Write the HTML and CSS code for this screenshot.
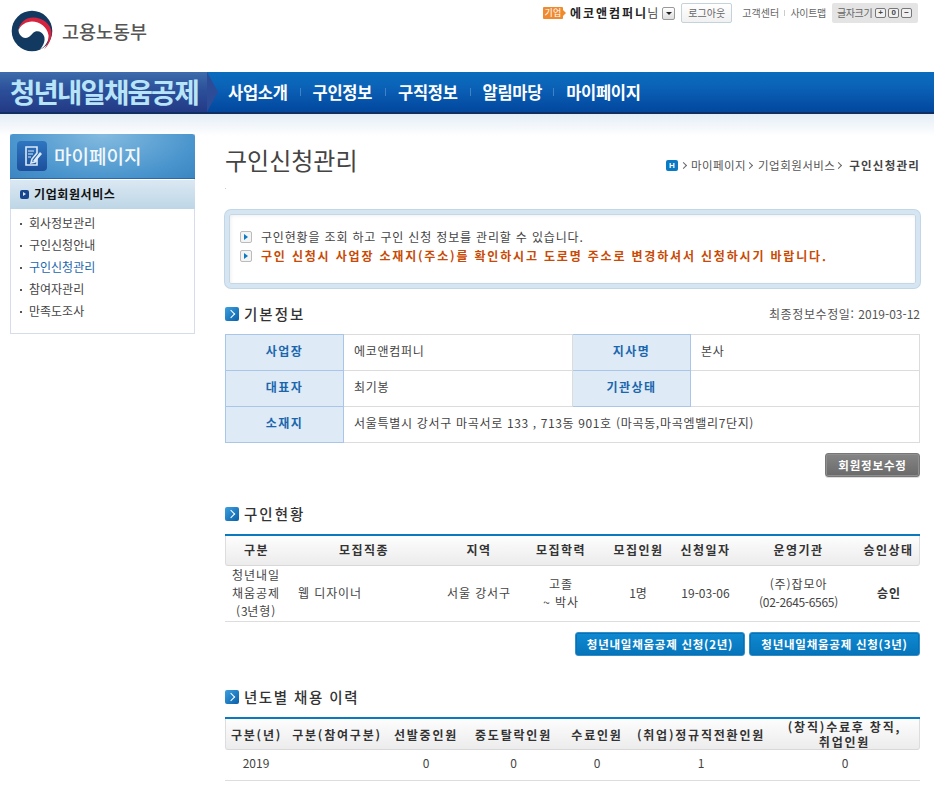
FILE: index.html
```html
<!DOCTYPE html>
<html lang="ko">
<head>
<meta charset="utf-8">
<title>구인신청관리</title>
<link rel="stylesheet" href="styles.css">
</head>
<body>
<header class="top">
  <a class="logo">
    <svg class="logo-mark" viewBox="0 0 42 42" width="42" height="42">
      <circle cx="21" cy="21" r="20.3" fill="#12395f"/>
      <path d="M7.5 20C9 13 15 10 21 10C30 10 38 16 38 25C38 31 34 37 29 39.5C33 35 34.5 30 33 26C31 21 25 20 22 23C19 27 15 29 12 27.5C9 26 7.5 23 7.5 20Z" fill="#fff"/>
      <path d="M7.5 20C9 12 15 7.5 22 7.5C32 7.5 39.5 14 40.5 22C41 29 37 36 33 39.5C37 34 38 29 37.5 25C36 17 29 11.5 21 11.5C15 11.5 10 15 7.5 20Z" fill="#d6233f"/>
    </svg>
    <span class="logo-text">고용노동부</span>
  </a>
  <div class="util">
    <span class="badge">기업</span>
    <strong class="company">에코앤컴퍼니</strong><span class="nim">님</span>
    <span class="drop"></span>
    <span class="logout">로그아웃</span>
    <span class="util-link first">고객센터</span>
    <i class="util-sep"></i>
    <span class="util-link">사이트맵</span>
    <span class="fontsize">글자크기<b>+</b><b>0</b><b>−</b></span>
  </div>
</header>

<nav class="gnb">
  <div class="brand">청년내일채움공제</div>
  <ul class="gnb-list">
    <li class="m1">사업소개</li>
    <li class="m2">구인정보</li>
    <li class="m3">구직정보</li>
    <li class="m4">알림마당</li>
    <li class="m5">마이페이지</li>
  </ul>
</nav>

<div class="wrap">
  <aside class="side">
    <div class="side-title">
      <span class="side-icon">
        <svg viewBox="0 0 30 30" width="30" height="30"><path d="M9 6H20V12L15 18L14 22L18 21L20 18V24H9Z" fill="none" stroke="#dbe9f7" stroke-width="1.6"/><path d="M11 10H17M11 13H16M11 16H14" stroke="#dbe9f7" stroke-width="1.2"/><path d="M16 20L23 11L25 13L18 21Z" fill="#dbe9f7"/></svg>
      </span>
      <span class="side-name">마이페이지</span>
    </div>
    <div class="side-sub"><i class="sub-bullet"></i>기업회원서비스</div>
    <ul class="side-list">
      <li>회사정보관리</li>
      <li>구인신청안내</li>
      <li class="on">구인신청관리</li>
      <li>참여자관리</li>
      <li>만족도조사</li>
    </ul>
  </aside>

  <main class="main">
    <div class="page-head">
      <h1>구인신청관리</h1>
      <div class="crumb"><span class="home">H</span><span class="gt g1"></span><span class="crumb-item">마이페이지</span><span class="gt"></span><span class="crumb-item">기업회원서비스</span><span class="gt g3"></span><strong>구인신청관리</strong></div>
    </div>

    <div class="notice">
      <p><i class="nb"></i>구인현황을 조회 하고 구인 신청 정보를 관리할 수 있습니다.</p>
      <p class="warn"><i class="nb"></i>구인 신청시 사업장 소재지(주소)를 확인하시고 도로명 주소로 변경하셔서 신청하시기 바랍니다.</p>
    </div>

    <div class="sec-head first-sec">
      <h2><i class="sec-icon"></i>기본정보</h2>
      <span class="updated">최종정보수정일: <span class="num">2019-03-12</span></span>
    </div>
    <table class="info">
      <colgroup><col class="c1"><col class="c2"><col class="c3"><col></colgroup>
      <tr><th>사업장</th><td>에코앤컴퍼니</td><th>지사명</th><td>본사</td></tr>
      <tr><th>대표자</th><td>최기봉</td><th>기관상태</th><td></td></tr>
      <tr><th>소재지</th><td colspan="3">서울특별시 강서구 마곡서로 <span class="addr-num">133 , 713</span>동 <span class="addr-num">901</span>호 (마곡동,마곡엠밸리<span class="addr-num">7</span>단지)</td></tr>
    </table>
    <div class="btn-row edit-row"><span class="btn gray">회원정보수정</span></div>

    <div class="sec-head s2"><h2><i class="sec-icon"></i>구인현황</h2></div>
    <table class="list t2">
      <colgroup><col class="a1"><col class="a2"><col class="a3"><col class="a4"><col class="a5"><col class="a6"><col class="a7"><col class="a8"></colgroup>
      <thead><tr><th>구분</th><th>모집직종</th><th>지역</th><th>모집학력</th><th>모집인원</th><th>신청일자</th><th>운영기관</th><th>승인상태</th></tr></thead>
      <tbody><tr>
        <td>청년내일<br>채움공제<br>(<span class="num">3</span>년형)</td>
        <td class="left">웹 디자이너</td>
        <td>서울 강서구</td>
        <td>고졸<br>~ 박사</td>
        <td><span class="num">1</span>명</td>
        <td class="num">19-03-06</td>
        <td>(주)잡모아<br><span class="num">(02-2645-6565)</span></td>
        <td><strong>승인</strong></td>
      </tr></tbody>
    </table>
    <div class="btn-row apply-row"><span class="btn blue">청년내일채움공제 신청(2년)</span><span class="btn blue">청년내일채움공제 신청(3년)</span></div>

    <div class="sec-head s3"><h2><i class="sec-icon"></i>년도별 채용 이력</h2></div>
    <table class="list t3">
      <colgroup><col class="b1"><col class="b2"><col class="b3"><col class="b4"><col class="b5"><col class="b6"><col></colgroup>
      <thead><tr><th>구분(년)</th><th>구분(참여구분)</th><th>선발중인원</th><th>중도탈락인원</th><th>수료인원</th><th>(취업)정규직전환인원</th><th>(창직)수료후 창직,<br>취업인원</th></tr></thead>
      <tbody><tr><td class="num">2019</td><td></td><td class="num">0</td><td class="num">0</td><td class="num">0</td><td class="num">1</td><td class="num">0</td></tr></tbody>
    </table>
  </main>
</div>
</body>
</html>
```

FILE: styles.css
```css
* { box-sizing: border-box; }
html, body { margin: 0; padding: 0; }
body {
  width: 934px;
  height: 800px;
  overflow: hidden;
  background: #fff;
  color: #444;
  font: 12px/1.4 "Noto Sans CJK KR", "Noto Sans", sans-serif;
  letter-spacing: 1px;
}
ul { margin: 0; padding: 0; list-style: none; }
h1, h2, p { margin: 0; font-weight: normal; }
i { display: inline-block; }
.num { letter-spacing: -0.3px; }

/* top */
.top { height: 72px; display: flex; justify-content: space-between; align-items: flex-start; }
.logo { display: flex; align-items: center; padding: 10px 0 0 11px; }
.logo-mark { display: block; }
.logo-text { margin: 0 0 0 9px; font-size: 18.5px; line-height: 24px; color: #555; letter-spacing: 0; font-weight: 500; }
.util { display: flex; align-items: center; height: 20px; margin: 3px 16px 0 0; color: #555; font-size: 11px; letter-spacing: 0; }
.badge { width: 20px; height: 12px; background: #f08a30; color: #fff; font-size: 9px; line-height: 12px; text-align: center; border-radius: 1px; margin-right: 7px; position: relative; }
.badge::after { content: ""; position: absolute; left: 20px; top: 3px; border-left: 3px solid #f08a30; border-top: 3px solid transparent; border-bottom: 3px solid transparent; }
.company { font-size: 12px; color: #222; letter-spacing: 2px; margin-right: -1px; }
.nim { font-size: 12px; color: #444; }
.drop { width: 13px; height: 13px; margin: 0 6px 0 4px; border: 1px solid #999; border-radius: 2px; background: linear-gradient(#fff, #ddd); position: relative; }
.drop::after { content: ""; position: absolute; left: 3px; top: 4px; border: 3px solid transparent; border-top: 3px solid #222; border-bottom: 0; }
.logout { width: 51px; height: 20px; border: 1px solid #c4d2dc; border-radius: 2px; background: linear-gradient(#fff, #f1f1f1); text-align: center; line-height: 17px; font-size: 10px; color: #666; }
.util-link { font-size: 10px; color: #666; letter-spacing: -.3px; }
.util-link.first { margin-left: 10px; letter-spacing: .1px; }
.util-sep { width: 1px; height: 6px; background: #ccc; margin: 0 5px; }
.fontsize { display: flex; align-items: center; gap: 2px; height: 20px; width: 86px; margin-left: 6px; padding: 0 0 0 5px; background: #e4e4e4; border-radius: 2px; font-size: 10px; color: #666; letter-spacing: -.4px; }
.fontsize b { width: 11px; height: 10px; border: 1px solid #777; border-radius: 2px; font: 700 8px/8px "Liberation Sans", sans-serif; color: #444; text-align: center; background: #f0f0f0; letter-spacing: 0; }
.fontsize b:first-of-type { margin-left: 1px; }

/* gnb */
.gnb { height: 42px; display: flex; background: linear-gradient(#0a6cbd, #0b63b8 35%, #02479e); border-bottom: 2px solid #0f2f63; position: relative; }
.brand {
  width: 207px; height: 40px; padding-left: 10px;
  background: linear-gradient(#3d6cab, #2c4f9a 45%, #233a86);
  color: #b8e4f8; font-size: 27.5px; font-weight: 700; line-height: 38px; letter-spacing: -1.8px;
  position: relative; white-space: nowrap;
}
.brand::after { content: ""; position: absolute; left: 207px; top: 0; border-left: 11px solid #2c4c97; border-top: 20px solid transparent; border-bottom: 20px solid transparent; }
.gnb-list { display: flex; color: #fff; font-size: 16.5px; font-weight: 700; line-height: 40px; letter-spacing: -.3px; }
.gnb-list li { position: relative; white-space: nowrap; }
.gnb-list li + li::before { content: ""; position: absolute; left: -13px; top: 16px; width: 1px; height: 8px; background: #3f82c6; }
.m1 { margin-left: 21px; }
.m2 { margin-left: 25px; }
.m3 { margin-left: 26px; }
.m4 { margin-left: 25px; }
.m5 { margin-left: 24px; }

/* wrap */
.wrap { display: flex; align-items: flex-start; background: linear-gradient(#e3edf6, #fff 22px) no-repeat; background-size: 100% 24px; }
.side { width: 185px; margin: 20px 0 0 10px; border: 1px solid #d5dde9; border-top: 0; }
.side-title { height: 45px; margin: 0 -1px; display: flex; align-items: center; padding-left: 7px; border-radius: 3px 3px 0 0; background: radial-gradient(ellipse at 50% 0, #84bbe0, #4a95cd 70%, #3b85c2); border-bottom: 1px solid #2a6aa8; }
.side-icon { width: 30px; height: 30px; border-radius: 4px; background: linear-gradient(#2f76c0, #1d4f9c); display: block; }
.side-name { margin-left: 7px; color: #f2f7fc; font-size: 19px; font-weight: 500; line-height: 26px; letter-spacing: 0; }
.side-sub { height: 29px; margin-top: 1px; margin-left: -1px; margin-right: -1px; padding-left: 10px; display: flex; align-items: center; background: linear-gradient(#dbe8f2, #bdd6e6); color: #111; font-weight: 700; letter-spacing: .6px; }
.sub-bullet { width: 9px; height: 9px; margin-right: 5px; border-radius: 2px; background: #17488f; position: relative; }
.sub-bullet::after { content: ""; position: absolute; left: 3px; top: 2px; border-left: 3px solid #dce9f3; border-top: 2.5px solid transparent; border-bottom: 2.5px solid transparent; }
.side-list { padding: 3px 0 11px; }
.side-list li { height: 22px; line-height: 22px; padding-left: 18px; position: relative; color: #444; letter-spacing: 0; }
.side-list li::before { content: ""; position: absolute; left: 9px; top: 11px; width: 2px; height: 2px; background: #555; }
.side-list li.on { color: #1a66ad; }

/* main */
.main { width: 695px; margin-left: 30px; }
.page-head { height: 96px; position: relative; }
.page-head::after { content: ""; position: absolute; left: 0; top: 74px; width: 1px; height: 1px; background: #ccc; }
.page-head h1 { padding-top: 29px; font-size: 24px; line-height: 34px; color: #444; letter-spacing: 0; }
.crumb { position: absolute; right: 0; top: 43px; display: flex; align-items: center; font-size: 11.5px; line-height: 16px; color: #555; letter-spacing: 0; white-space: nowrap; }
.crumb-item { letter-spacing: .45px; }
.crumb strong { color: #444; letter-spacing: 1.2px; }
.home { width: 12px; height: 11px; border-radius: 2px; background: #0b79c3; color: #fff; font: 700 8px/11px "Liberation Sans", sans-serif; text-align: center; margin-right: 2px; }
.gt { width: 5px; height: 5px; margin: 0 6px 0 1px; border-top: 1px solid #666; border-right: 1px solid #666; transform: rotate(45deg); }
.gt.g1 { margin-right: 5px; }
.gt.g3 { margin-right: 8px; }

.notice { height: 78px; padding: 13px 0 0 11px; border: 4px solid #d6e5f2; border-radius: 6px; box-shadow: inset 0 0 0 1px #c6d6e4, inset 1px 1px 4px #e8e8e8, 0 0 0 1px #c2d6e8; background: #fff; margin: 0; }
.notice p { height: 19px; line-height: 19px; white-space: nowrap; color: #444; letter-spacing: .83px; display: flex; align-items: center; }
.notice .warn { color: #c84a05; font-weight: 700; letter-spacing: 1.82px; }
.nb { width: 12px; height: 12px; margin-right: 9px; border: 1px solid #bbb; border-radius: 2px; background: #f4f4f4; position: relative; flex: none; }
.nb::after { content: ""; position: absolute; left: 3px; top: 2px; border-left: 4px solid #0b79c3; border-top: 3px solid transparent; border-bottom: 3px solid transparent; }

.sec-head { display: flex; justify-content: space-between; align-items: center; height: 22px; }
.first-sec { margin-top: 15px; }
.sec-head h2 { display: flex; align-items: center; font-size: 14.5px; font-weight: 500; line-height: 22px; color: #333; letter-spacing: 2px; }
.sec-icon { width: 14px; height: 14px; margin-right: 5px; border-radius: 2px; background: linear-gradient(135deg, #3ba0e0, #0b5fa8); position: relative; flex: none; }
.sec-icon::after { content: ""; position: absolute; left: 3px; top: 4px; width: 5px; height: 5px; border-top: 1.5px solid #fff; border-right: 1.5px solid #fff; transform: rotate(45deg); }
.updated { color: #555; letter-spacing: .6px; }
.updated .num { letter-spacing: 0; }

table { width: 695px; border-collapse: collapse; table-layout: fixed; }
.info { margin-top: 9px; }
.c1 { width: 118px; }
.c2 { width: 229px; }
.c3 { width: 118px; }
.info th, .info td { height: 36px; padding: 0 0 3px; }
.info th { background: #deeaf5; color: #1a66ad; font-weight: 700; border: 1px solid #a9c6e8; text-align: center; letter-spacing: 1.4px; }
.info td { padding-left: 10px; color: #444; letter-spacing: .7px; border: 1px solid #dcdcdc; }
.addr-num { letter-spacing: .6px; }

.btn-row { display: flex; justify-content: flex-end; }
.edit-row { margin-top: 10px; }
.btn { display: block; height: 24px; text-align: center; line-height: 22px; border-radius: 3px; color: #fff; font-weight: 700; white-space: nowrap; font-size: 11.5px; }
.gray { width: 95px; letter-spacing: .8px; background: linear-gradient(#858585, #6a6a6a); border: 1px solid #777; box-shadow: inset 0 0 0 1px #8f8f8f, 0 1px 0 #ddd; }
.blue { width: 171px; letter-spacing: .75px; background: linear-gradient(#0f8ad2, #0674ba); border: 1px solid #2f8fca; box-shadow: inset 0 0 0 1px #0a70b4; }
.apply-row { gap: 4px; margin-top: 10px; }
.apply-row .blue:first-child { width: 170px; }

.s2 { margin-top: 26px; }
.s3 { margin-top: 30px; }
.sec-head.s3 h2 { letter-spacing: 1.5px; }
.list { border-collapse: separate; border-spacing: 0; border-top: 2px solid #0b79bd; }
.list th { height: 30px; padding: 0; font-weight: 700; color: #333; letter-spacing: 1.5px; background: linear-gradient(#fdfdfd, #ececec); border-bottom: 1px solid #d8d8d8; white-space: nowrap; }
.list th:first-child { border-left: 1px solid #ddd; border-bottom-left-radius: 3px; }
.list th:last-child { border-right: 1px solid #ddd; border-bottom-right-radius: 3px; }
.list td { padding: 0 0 4px; text-align: center; color: #444; letter-spacing: .9px; border-bottom: 1px solid #ddd; line-height: 18px; }
.list td.num { letter-spacing: 0; }
.t2 { margin-top: 9px; }
.a1 { width: 62px; } .a2 { width: 154px; } .a3 { width: 76px; } .a4 { width: 88px; }
.a5 { width: 67px; } .a6 { width: 67px; } .a7 { width: 119px; } .a8 { width: 62px; }
.t2 td { height: 56px; padding-bottom: 1px; }
.t2 td strong { color: #333; }
.t2 td.left { text-align: left; padding-left: 11px; }
.t3 { margin-top: 9px; }
.b1 { width: 62px; } .b2 { width: 100px; } .b3 { width: 78px; } .b4 { width: 97px; } .b5 { width: 70px; } .b6 { width: 138px; }
.t3 th { height: 31px; letter-spacing: 1.8px; line-height: 15px; }
.t3 td { height: 31px; }
```
